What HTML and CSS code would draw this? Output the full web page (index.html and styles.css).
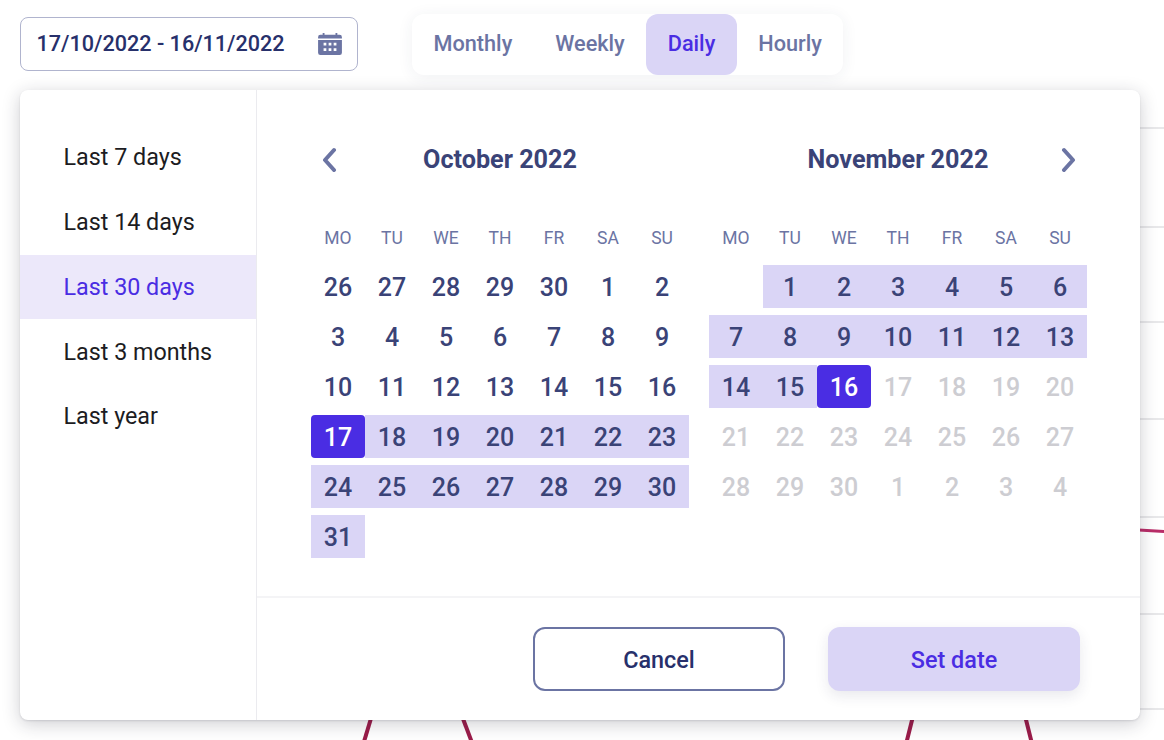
FILE: index.html
```html
<!DOCTYPE html>
<html lang="en">
<head>
    <meta charset="UTF-8">
    <meta name="viewport" content="width=device-width, initial-scale=1.0">
    <title>Date range</title>
    <link rel="stylesheet" href="styles.css">
</head>
<body>

<!-- chart that sits behind the picker -->
<svg class="chart-bg" width="1164" height="740" viewBox="0 0 1164 740">
  <g stroke="#e8e8ea" stroke-width="2" fill="none">
    <path d="M1130 128H1164"/>
    <path d="M1130 227H1164"/>
    <path d="M1130 322H1164"/>
    <path d="M1130 419H1164"/>
    <path d="M1130 517H1164"/>
    <path d="M1130 614H1164"/>
    <path d="M1130 709H1164"/>
  </g>
  <g stroke="#9b1c4a" stroke-width="4" fill="none">
    <path d="M1130 529.500L1164 531.500" stroke="#b92d68" stroke-width="3"/>
    <path d="M372 715L363 745"/>
    <path d="M461.600 715L472.900 745"/>
    <path d="M913.300 715L905.800 745"/>
    <path d="M1024.800 715L1032.300 745"/>
  </g>
</svg>

<div class="topbar">
  <div class="date-input">
    <span>17/10/2022 - 16/11/2022</span>
    <svg class="cal-icon" width="24" height="22" viewBox="0 0 26 24">
      <path fill="#6b74a3" fill-rule="evenodd" d="M5 0h2v2h12V0h2v2h2.500A2.500 2.500 0 0 1 26 4.500V6H0V4.500A2.500 2.500 0 0 1 2.500 2H5zM0 7.500h26v14a2.500 2.500 0 0 1-2.500 2.500h-21A2.500 2.500 0 0 1 0 21.500zM6 10.500v3h3v-3zm5.500 0v3h3v-3zm5.500 0v3h3v-3zM6 16.500v3h3v-3zm5.500 0v3h3v-3zm5.500 0v3h3v-3z"/>
    </svg>
  </div>
  <div class="tabs">
    <div class="tab">Monthly</div>
    <div class="tab">Weekly</div>
    <div class="tab active">Daily</div>
    <div class="tab">Hourly</div>
  </div>
</div>

<div class="picker">
  <ul class="presets">
    <li>Last 7 days</li>
    <li>Last 14 days</li>
    <li class="active">Last 30 days</li>
    <li>Last 3 months</li>
    <li>Last year</li>
  </ul>

  <div class="main">
    <div class="calendars">
      <div class="month">
        <div class="month-head">
          <svg class="arrow" width="16" height="26" viewBox="0 0 16 26"><path d="M12 4L3 14l9 10" fill="none" stroke="#6b74a3" stroke-width="4" stroke-linecap="round" stroke-linejoin="round"/></svg>
          <h3>October 2022</h3>
          <span class="arrow-space"></span>
        </div>
        <div class="grid">
          <div class="wd">Mo</div><div class="wd">Tu</div><div class="wd">We</div><div class="wd">Th</div><div class="wd">Fr</div><div class="wd">Sa</div><div class="wd">Su</div>
          <div class="day">26</div><div class="day">27</div><div class="day">28</div><div class="day">29</div><div class="day">30</div><div class="day">1</div><div class="day">2</div>
          <div class="day">3</div><div class="day">4</div><div class="day">5</div><div class="day">6</div><div class="day">7</div><div class="day">8</div><div class="day">9</div>
          <div class="day">10</div><div class="day">11</div><div class="day">12</div><div class="day">13</div><div class="day">14</div><div class="day">15</div><div class="day">16</div>
          <div class="day sel">17</div><div class="day range">18</div><div class="day range">19</div><div class="day range">20</div><div class="day range">21</div><div class="day range">22</div><div class="day range">23</div>
          <div class="day range">24</div><div class="day range">25</div><div class="day range">26</div><div class="day range">27</div><div class="day range">28</div><div class="day range">29</div><div class="day range">30</div>
          <div class="day range">31</div>
        </div>
      </div>

      <div class="month">
        <div class="month-head">
          <span class="arrow-space"></span>
          <h3>November 2022</h3>
          <svg class="arrow" width="16" height="26" viewBox="0 0 16 26"><path d="M4 4l9 10-9 10" fill="none" stroke="#6b74a3" stroke-width="4" stroke-linecap="round" stroke-linejoin="round"/></svg>
        </div>
        <div class="grid">
          <div class="wd">Mo</div><div class="wd">Tu</div><div class="wd">We</div><div class="wd">Th</div><div class="wd">Fr</div><div class="wd">Sa</div><div class="wd">Su</div>
          <div class="day"></div><div class="day range">1</div><div class="day range">2</div><div class="day range">3</div><div class="day range">4</div><div class="day range">5</div><div class="day range">6</div>
          <div class="day range">7</div><div class="day range">8</div><div class="day range">9</div><div class="day range">10</div><div class="day range">11</div><div class="day range">12</div><div class="day range">13</div>
          <div class="day range">14</div><div class="day range">15</div><div class="day sel">16</div><div class="day off">17</div><div class="day off">18</div><div class="day off">19</div><div class="day off">20</div>
          <div class="day off">21</div><div class="day off">22</div><div class="day off">23</div><div class="day off">24</div><div class="day off">25</div><div class="day off">26</div><div class="day off">27</div>
          <div class="day off">28</div><div class="day off">29</div><div class="day off">30</div><div class="day off">1</div><div class="day off">2</div><div class="day off">3</div><div class="day off">4</div>
        </div>
      </div>
    </div>

    <div class="actions">
      <button class="btn btn-cancel">Cancel</button>
      <button class="btn btn-set">Set date</button>
    </div>
  </div>
</div>

</body>
</html>
```

FILE: styles.css
```css
* {
  box-sizing: border-box;
}

body {
  margin: 0;
  height: 740px;
  overflow: hidden;
  position: relative;
  background-color: #fff;
  font-family: Roboto, sans-serif;
}

.chart-bg {
  position: absolute;
  left: 0;
  top: 0;
}

.topbar {
  position: relative;
  display: flex;
  align-items: flex-start;
  padding: 14px 0 0 20px;
  height: 75px;
}

.date-input {
  display: flex;
  align-items: center;
  justify-content: space-between;
  width: 338px;
  height: 54px;
  margin-top: 3px;
  padding: 0 15px 1px 15.500px;
  background-color: #fff;
  border: 1px solid #b0b4ce;
  border-radius: 8px;
  color: #27306b;
  font-size: 21.600px;
  font-weight: 500;
}

.cal-icon {
  display: block;
}

.tabs {
  display: flex;
  height: 61px;
  margin-left: 54px;
  background-color: #fff;
  border-radius: 12px;
  box-shadow: 0 2px 16px rgba(40, 50, 90, 0.07);
}

.tab {
  display: flex;
  align-items: center;
  justify-content: center;
  padding: 0 21.500px 2px;
  border-radius: 12px;
  color: #6b74a3;
  font-size: 21.700px;
  font-weight: 500;
}

.tab.active {
  background-color: #dad5f6;
  color: #4a2de3;
}

.picker {
  position: relative;
  display: flex;
  width: 1120px;
  height: 630px;
  margin: 15px 0 0 20px;
  background-color: #fff;
  border-radius: 8px;
  box-shadow: 0 1px 2px rgba(30, 30, 50, 0.12), 0 4px 18px rgba(30, 30, 50, 0.22);
}

.presets {
  flex: none;
  width: 237px;
  margin: 0;
  padding: 35px 0 0;
  list-style: none;
  border-right: 1px solid #ebebef;
}

.presets li {
  display: flex;
  align-items: center;
  height: 64.750px;
  padding-left: 43.500px;
  color: #1c1c22;
  font-size: 23.300px;
}

.presets li.active {
  background-color: #ece8fa;
  color: #4a2de3;
}

.main {
  flex: 1;
  display: flex;
  flex-direction: column;
  min-width: 0;
}

.calendars {
  display: flex;
  gap: 20px;
  height: 508px;
  padding: 0 0 0 54px;
  border-bottom: 2px solid #f4f4f6;
}

.month {
  width: 378px;
}

.month-head {
  display: flex;
  align-items: center;
  justify-content: space-between;
  height: 46px;
  margin-top: 46px;
  padding: 0 11px;
}

.month-head h3 {
  margin: 0;
  color: #3a4377;
  font-size: 25.200px;
  font-weight: 700;
}

.arrow {
  display: block;
}

.arrow-space {
  width: 16px;
}

.grid {
  display: grid;
  grid-template-columns: repeat(7, 54px);
  grid-auto-rows: 43px;
  row-gap: 7px;
  margin-top: 33px;
}

.wd {
  display: flex;
  align-items: center;
  justify-content: center;
  padding-top: 2px;
  color: #6b74a3;
  font-size: 17.500px;
  text-transform: uppercase;
}

.day {
  display: flex;
  align-items: center;
  justify-content: center;
  padding-top: 1px;
  color: #3a4377;
  font-size: 25px;
  font-weight: 500;
}

.day.range {
  background-color: #dad5f6;
}

.day.sel {
  background-color: #4a2de3;
  border-radius: 4px;
  color: #fff;
}

.day.off {
  color: #cdcdd2;
}

.actions {
  display: flex;
  justify-content: flex-end;
  gap: 43px;
  padding: 29px 60px 0 0;
}

.btn {
  width: 252px;
  height: 64px;
  padding-top: 3px;
  border-radius: 12px;
  font-family: Roboto, sans-serif;
  font-size: 23.400px;
  font-weight: 500;
  cursor: pointer;
}

.btn-cancel {
  background-color: #fff;
  border: 2px solid #6b74a3;
  color: #27306b;
}

.btn-set {
  background-color: #dad5f6;
  border: none;
  color: #4a2de3;
  box-shadow: 0 5px 14px rgba(40, 40, 80, 0.1);
}
```
